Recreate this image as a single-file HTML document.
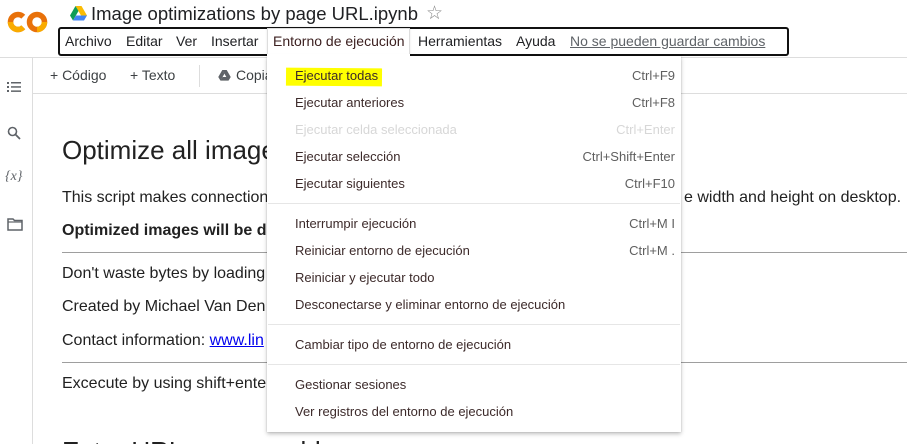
<!DOCTYPE html>
<html><head><meta charset="utf-8"><style>
*{margin:0;padding:0;box-sizing:border-box}
html{height:444px;overflow:hidden}
body{width:907px;height:444px;overflow:hidden;background:#fff;font-family:"Liberation Sans",sans-serif;color:#202124;position:relative}
.a{position:absolute;white-space:nowrap}
.mi{position:absolute;left:295px;font-size:13px;color:#3c2a2a;line-height:16px}
.sc{position:absolute;right:232px;font-size:13px;color:#5f5f5f;line-height:16px;text-align:right}
.sep{position:absolute;left:268px;width:412px;height:1px;background:#e6e6e6}
.t{font-size:16px;left:62px;color:#212121;line-height:20px}
</style></head><body>
<svg class="a" style="left:0;top:0" width="56" height="44" viewBox="0 0 56 44">
<path d="M23.3 16.7 A7.5 7.5 0 1 0 23.3 27.3" fill="none" stroke="#e8710a" stroke-width="5.5"/>
<path d="M10.5 22 A7.5 7.5 0 0 0 23.3 27.3" fill="none" stroke="#f9ab00" stroke-width="5.5"/>
<circle cx="37" cy="22" r="7.5" fill="none" stroke="#e8710a" stroke-width="5.5"/>
<path d="M37 29.5 A7.5 7.5 0 0 0 44.5 22" fill="none" stroke="#f9ab00" stroke-width="5.5"/>
</svg>
<svg class="a" style="left:70px;top:6px" width="17" height="15" viewBox="0 0 17 15">
<path d="M5.5 0h6l5.5 9.5h-6z" fill="#fbbc04"/><path d="M5.5 0L0 9.5l3 5 5.5-9.5z" fill="#0f9d58"/><path d="M3 14.5h11l3-5H6z" fill="#4285f4"/>
</svg>
<div class="a" style="left:91px;top:3px;font-size:18.5px;color:#202124">Image optimizations by page URL.ipynb</div>
<div class="a" style="left:426px;top:2px;font-size:19px;color:#888">☆</div>
<div class="a" style="left:58px;top:27px;width:731px;height:29px;border:2px solid #111;border-radius:3px"></div>
<div class="a" style="left:65px;top:33px;font-size:14px;color:#202124">Archivo</div>
<div class="a" style="left:126px;top:33px;font-size:14px">Editar</div>
<div class="a" style="left:176px;top:33px;font-size:14px">Ver</div>
<div class="a" style="left:211px;top:33px;font-size:14px">Insertar</div>
<div class="a" style="left:267px;top:28px;width:143px;height:29px;background:#fff;border:1px solid #ddd;border-bottom:none;box-shadow:0 -1px 2px rgba(0,0,0,.1)"></div>
<div class="a" style="left:273px;top:33px;font-size:14px;color:#3c2020">Entorno de ejecución</div>
<div class="a" style="left:418px;top:33px;font-size:14px">Herramientas</div>
<div class="a" style="left:516px;top:33px;font-size:14px">Ayuda</div>
<div class="a" style="left:570px;top:33px;font-size:14px;color:#5f6368;text-decoration:underline">No se pueden guardar cambios</div>
<div class="a" style="left:0;top:57px;width:907px;height:1px;background:#ddd"></div>
<div class="a" style="left:33px;top:93px;width:874px;height:1px;background:#ddd"></div>
<div class="a" style="left:32px;top:58px;width:1px;height:386px;background:#ddd"></div>
<svg class="a" style="left:7px;top:81px" width="14" height="12" viewBox="0 0 14 12"><g fill="#5f6368"><rect x="0" y="1" width="2" height="2"/><rect x="4" y="1" width="10" height="1.5"/><rect x="0" y="5" width="2" height="2"/><rect x="4" y="5.2" width="10" height="1.5"/><rect x="0" y="9" width="2" height="2"/><rect x="4" y="9.4" width="10" height="1.5"/></g></svg>
<svg class="a" style="left:7px;top:126px" width="14" height="14" viewBox="0 0 14 14"><circle cx="5.5" cy="5.5" r="4" fill="none" stroke="#5f6368" stroke-width="1.6"/><path d="M8.5 8.5L13 13" stroke="#5f6368" stroke-width="1.8"/></svg>
<div class="a" style="left:5px;top:169px;font-size:14px;color:#5f6368;font-family:'Liberation Serif',serif;font-style:italic">{x}</div>
<svg class="a" style="left:7px;top:218px" width="16" height="13" viewBox="0 0 16 13"><path d="M1 1h5l1.5 1.5H15V12H1z" fill="none" stroke="#5f6368" stroke-width="1.5"/><path d="M1 4h14" stroke="#5f6368" stroke-width="1.2"/></svg>
<div class="a" style="left:50px;top:67px;font-size:14px;color:#3c4043">+ Código</div>
<div class="a" style="left:130px;top:67px;font-size:14px;color:#3c4043">+ Texto</div>
<div class="a" style="left:199px;top:65px;width:1px;height:22px;background:#ddd"></div>
<svg class="a" style="left:218px;top:70px" width="13" height="11" viewBox="0 0 17 15"><path d="M5.5 0h6l5.5 9.5h-6zM5.5 0L0 9.5l3 5 5.5-9.5zM3 14.5h11l3-5H6z" fill="#5f6368"/></svg>
<div class="a" style="left:236px;top:67px;font-size:14px;color:#3c4043">Copia</div>
<div class="a" style="left:62px;top:135px;font-size:26px;color:#212121">Optimize all images</div>
<div class="a t" style="top:188px">This script makes connection</div>
<div class="a t" style="left:684px;top:188px">e width and height on desktop.</div>
<div class="a t" style="top:221px;font-weight:bold">Optimized images will be dow</div>
<div class="a" style="left:62px;top:252px;width:845px;height:1px;background:#9e9e9e"></div>
<div class="a t" style="top:264px">Don't waste bytes by loading</div>
<div class="a t" style="top:297px">Created by Michael Van Den</div>
<div class="a t" style="top:331px">Contact information: <span style="color:#00e;text-decoration:underline">www.lin</span></div>
<div class="a" style="left:62px;top:362px;width:845px;height:1px;background:#9e9e9e"></div>
<div class="a t" style="top:374px">Excecute by using shift+enter</div>
<div class="a" style="left:62px;top:430px;width:400px;height:14px;overflow:hidden"><div class="a" style="left:0;top:6px;font-size:26px;color:#212121">Enter URLs you would</div></div>
<div class="a" style="left:267px;top:56px;width:414px;height:376px;background:#fff;box-shadow:0 2px 4px rgba(0,0,0,.25),0 0 1px rgba(0,0,0,.2)"></div>
<div class="a" style="left:267px;top:54px;width:143px;height:4px;background:#fff"></div>
<div class="a" style="left:286px;top:68px;width:96px;height:18px;background:#ffff00;transform:rotate(0.5deg)"></div>
<div class="mi" style="top:68px">Ejecutar todas</div><div class="sc" style="top:68px">Ctrl+F9</div>
<div class="mi" style="top:95px">Ejecutar anteriores</div><div class="sc" style="top:95px">Ctrl+F8</div>
<div class="mi" style="top:122px;color:#d7d7d7">Ejecutar celda seleccionada</div><div class="sc" style="top:122px;color:#d7d7d7">Ctrl+Enter</div>
<div class="mi" style="top:149px">Ejecutar selección</div><div class="sc" style="top:149px">Ctrl+Shift+Enter</div>
<div class="mi" style="top:176px">Ejecutar siguientes</div><div class="sc" style="top:176px">Ctrl+F10</div>
<div class="sep" style="top:203px"></div>
<div class="mi" style="top:216px">Interrumpir ejecución</div><div class="sc" style="top:216px">Ctrl+M I</div>
<div class="mi" style="top:243px">Reiniciar entorno de ejecución</div><div class="sc" style="top:243px">Ctrl+M .</div>
<div class="mi" style="top:270px">Reiniciar y ejecutar todo</div>
<div class="mi" style="top:297px">Desconectarse y eliminar entorno de ejecución</div>
<div class="sep" style="top:324px"></div>
<div class="mi" style="top:337px">Cambiar tipo de entorno de ejecución</div>
<div class="sep" style="top:364px"></div>
<div class="mi" style="top:377px">Gestionar sesiones</div>
<div class="mi" style="top:404px">Ver registros del entorno de ejecución</div>
</body></html>
